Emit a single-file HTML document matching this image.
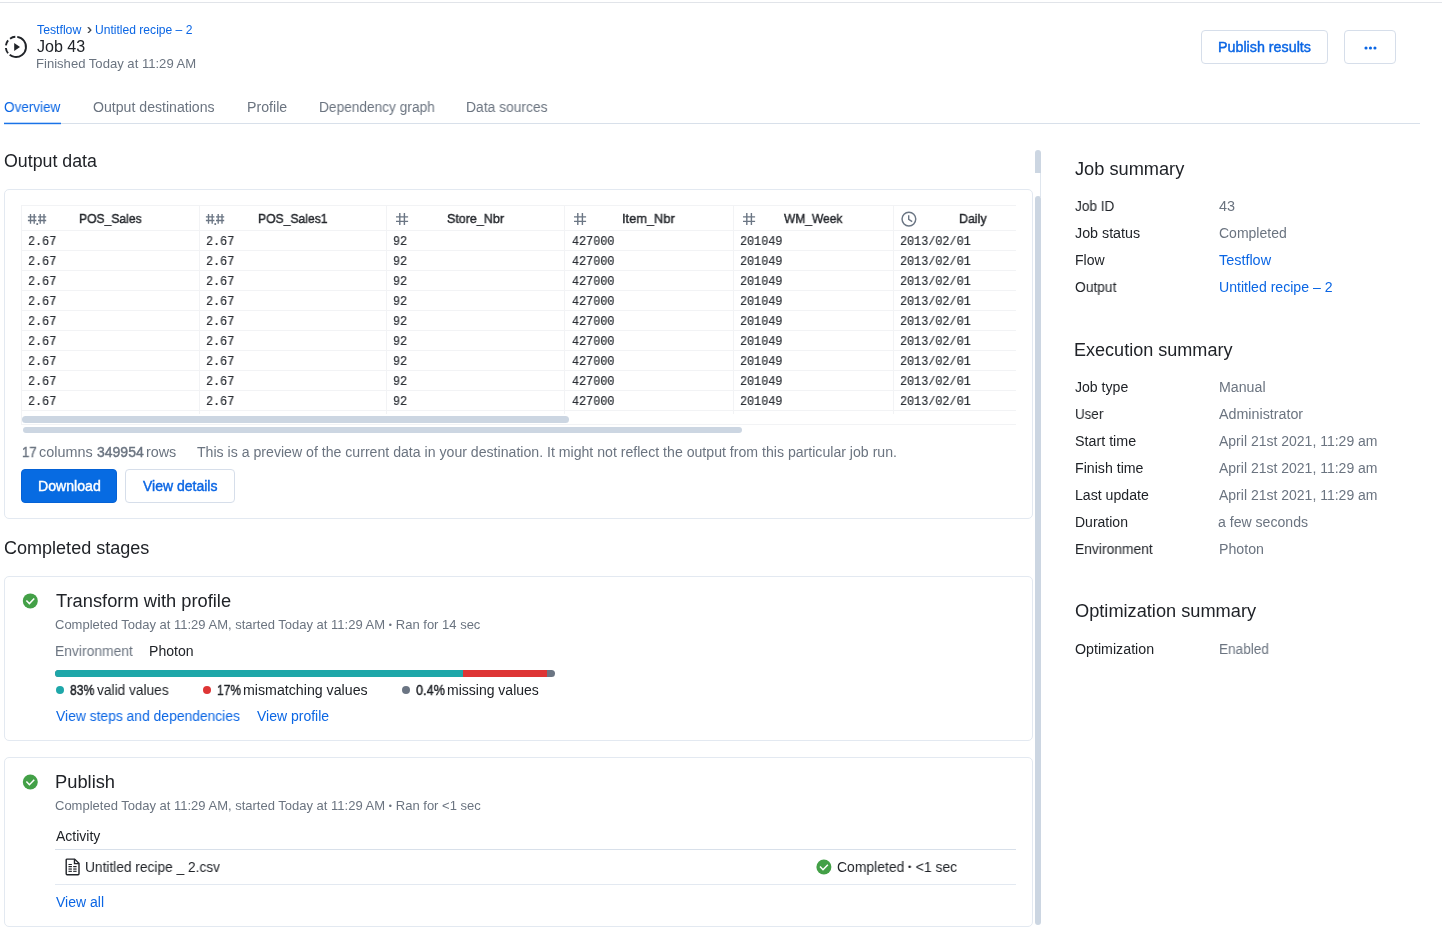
<!DOCTYPE html>
<html lang="en">
<head>
<meta charset="utf-8">
<title>Job 43</title>
<style>
html,body{margin:0;padding:0;background:#fff;}
body{width:1442px;height:944px;position:relative;overflow:hidden;font-family:"Liberation Sans",sans-serif;color:#202328;}
.a{position:absolute;white-space:nowrap;line-height:1;transform-origin:0 0;will-change:transform;}
.p{position:absolute;}
h1,h2,h3{margin:0;font-weight:normal;}
a{text-decoration:none;display:block;}
header,nav,main,section,aside{display:block;margin:0;padding:0;}
.card{position:absolute;border:1px solid #e3e9f1;border-radius:5px;box-sizing:border-box;background:#fff;}
.btn{position:absolute;box-sizing:border-box;border-radius:4px;}
.hl{position:absolute;height:1px;background:#f2f3f5;}
.vl{position:absolute;width:1px;background:#f2f3f5;}
.sb{position:absolute;background:#ccd6e2;}
</style>
</head>
<body>
<!-- top line -->
<div class="p" style="left:0;top:2px;width:1442px;height:1px;background:#e1e4e9;"></div>

<header>
<!-- header icon -->
<svg class="p" style="left:3px;top:34.3px;" width="26" height="26" viewBox="0 0 26 26">
  <circle cx="12.9" cy="12.9" r="10.1" fill="none" stroke="#202328" stroke-width="1.9" stroke-dasharray="36.85 2.29 5.64 2.64 5.46 2.64 5.55 2.39" transform="rotate(-82.3 12.9 12.9)"/>
  <path d="M11.2 9.1 L17 13 L11.2 16.9 Z" fill="#202328"/>
</svg>

<!-- header buttons -->
<div class="btn" style="left:1201px;top:30px;width:127px;height:34px;border:1px solid #d6deea;"></div>
<div class="btn" style="left:1344px;top:30px;width:52px;height:34px;border:1px solid #d6deea;">
  <svg width="16" height="6" viewBox="0 0 16 6" style="position:absolute;left:17.8px;top:13.6px;"><circle cx="3" cy="3" r="1.55" fill="#0b66e4"/><circle cx="7.45" cy="3" r="1.55" fill="#0b66e4"/><circle cx="11.95" cy="3" r="1.55" fill="#0b66e4"/></svg>
</div>

<a href="#" class="a" style="left:36.64px;top:23.80px;color:#0b66e4;font-family:'Liberation Sans',sans-serif;font-size:12px;transform:scaleX(1.0220);">Testflow</a>
<div class="a" style="left:86.90px;top:21.40px;color:#33373d;font-family:'Liberation Sans',sans-serif;font-size:15px;-webkit-text-stroke:0.2px #33373d;">›</div>
<a href="#" class="a" style="left:94.64px;top:23.80px;color:#0b66e4;font-family:'Liberation Sans',sans-serif;font-size:12px;transform:scaleX(1.0073);">Untitled recipe – 2</a>
<h1 class="a" style="left:36.65px;top:39.00px;color:#202328;font-family:'Liberation Sans',sans-serif;font-size:16px;transform:scaleX(1.0043);">Job 43</h1>
<div class="a" style="left:35.89px;top:56.60px;color:#6b7480;font-family:'Liberation Sans',sans-serif;font-size:13px;transform:scaleX(1.0060);">Finished Today at 11:29 AM</div>
<div class="a" style="left:1218.08px;top:39.80px;color:#0b66e4;font-family:'Liberation Sans',sans-serif;font-size:14px;-webkit-text-stroke:0.42px #0b66e4;transform:scaleX(1.0206);">Publish results</div>
</header>
<nav>
<!-- tabs underline -->
<div class="p" style="left:4px;top:123px;width:1416px;height:1px;background:#d8e0ea;"></div>
<div class="p" style="left:4px;top:122px;width:57px;height:1px;background:rgba(26,115,232,.3);"></div>
<div class="p" style="left:4px;top:123px;width:57px;height:1px;background:#1a73e8;"></div>
<div class="p" style="left:4px;top:124px;width:57px;height:1px;background:rgba(26,115,232,.2);"></div>

<a href="#" class="a" style="left:4.18px;top:100.10px;color:#0b66e4;font-family:'Liberation Sans',sans-serif;font-size:14px;transform:scaleX(0.9643);">Overview</a>
<div class="a" style="left:92.89px;top:100.10px;color:#6b7480;font-family:'Liberation Sans',sans-serif;font-size:14px;transform:scaleX(1.0079);">Output destinations</div>
<div class="a" style="left:246.89px;top:100.10px;color:#6b7480;font-family:'Liberation Sans',sans-serif;font-size:14px;transform:scaleX(1.0118);">Profile</div>
<div class="a" style="left:318.92px;top:100.10px;color:#6b7480;font-family:'Liberation Sans',sans-serif;font-size:14px;transform:scaleX(0.9785);">Dependency graph</div>
<div class="a" style="left:466.41px;top:100.10px;color:#6b7480;font-family:'Liberation Sans',sans-serif;font-size:14px;transform:scaleX(0.9889);">Data sources</div>
</nav>
<main>
<section>
<!-- card 1: output data -->
<div class="card" style="left:4px;top:189px;width:1029px;height:330px;"></div>
<div class="p" id="tbl" style="left:21px;top:205px;width:995px;height:220px;overflow:hidden;">
  <!-- outer borders -->
  <div class="hl" style="left:0;top:0;width:995px;"></div>
  <div class="vl" style="left:0;top:0;height:220px;"></div>
  <div class="hl" style="left:0;top:219px;width:995px;"></div>
  <!-- header bottom + row lines -->
  <div class="hl" style="left:0;top:25px;width:995px;"></div>
  <div class="hl" style="left:0;top:45px;width:995px;"></div>
  <div class="hl" style="left:0;top:65px;width:995px;"></div>
  <div class="hl" style="left:0;top:85px;width:995px;"></div>
  <div class="hl" style="left:0;top:105px;width:995px;"></div>
  <div class="hl" style="left:0;top:125px;width:995px;"></div>
  <div class="hl" style="left:0;top:145px;width:995px;"></div>
  <div class="hl" style="left:0;top:165px;width:995px;"></div>
  <div class="hl" style="left:0;top:185px;width:995px;"></div>
  <div class="hl" style="left:0;top:205px;width:995px;"></div>
  <!-- column lines -->
  <div class="vl" style="left:178px;top:0;height:209px;"></div>
  <div class="vl" style="left:365px;top:0;height:209px;"></div>
  <div class="vl" style="left:543px;top:0;height:209px;"></div>
  <div class="vl" style="left:712px;top:0;height:209px;"></div>
  <div class="vl" style="left:872px;top:0;height:209px;"></div>
</div>
<!-- header icons -->
<svg class="p" style="left:26px;top:212px;" width="22" height="14" viewBox="0 0 22 14">
  <g stroke="#6b7684" stroke-width="1.35" fill="none">
    <path d="M4.5 1.9v9.8M8.2 1.9v9.8M1.9 4.9h8.5M1.9 8.5h8.5"/>
    <path d="M14.2 1.9v9.8M18 1.9v9.8M12 4.9h8.2M12 8.5h8.2"/>
  </g>
  <rect x="10.4" y="11.2" width="1.7" height="1.7" fill="#5f6a78"/>
</svg>
<svg class="p" style="left:204px;top:212px;" width="22" height="14" viewBox="0 0 22 14">
  <g stroke="#6b7684" stroke-width="1.35" fill="none">
    <path d="M4.5 1.9v9.8M8.2 1.9v9.8M1.9 4.9h8.5M1.9 8.5h8.5"/>
    <path d="M14.2 1.9v9.8M18 1.9v9.8M12 4.9h8.2M12 8.5h8.2"/>
  </g>
  <rect x="10.4" y="11.2" width="1.7" height="1.7" fill="#5f6a78"/>
</svg>
<svg class="p" style="left:395px;top:212px;" width="14" height="14" viewBox="0 0 14 14"><path d="M4.8 1.1v11.9M9.4 1.1v11.9M1 4.9h12.1M1 9.4h12.1" stroke="#6b7684" stroke-width="1.4" fill="none"/></svg>
<svg class="p" style="left:573px;top:212px;" width="14" height="14" viewBox="0 0 14 14"><path d="M4.8 1.1v11.9M9.4 1.1v11.9M1 4.9h12.1M1 9.4h12.1" stroke="#6b7684" stroke-width="1.4" fill="none"/></svg>
<svg class="p" style="left:742px;top:212px;" width="14" height="14" viewBox="0 0 14 14"><path d="M4.8 1.1v11.9M9.4 1.1v11.9M1 4.9h12.1M1 9.4h12.1" stroke="#6b7684" stroke-width="1.4" fill="none"/></svg>
<svg class="p" style="left:900px;top:210px;" width="18" height="18" viewBox="0 0 18 18"><circle cx="8.9" cy="9.1" r="6.85" fill="none" stroke="#6b7684" stroke-width="1.45"/><path d="M8.7 5.3v4.1l3.5 2.2" fill="none" stroke="#6b7684" stroke-width="1.4"/></svg>

<!-- table scrollbars -->
<div class="sb" style="left:22px;top:416px;width:547px;height:7px;border-radius:3.5px;"></div>
<div class="sb" style="left:23px;top:427px;width:719px;height:6px;border-radius:3px;"></div>

<!-- buttons -->
<div class="btn" style="left:21px;top:469px;width:96px;height:34px;background:#076be2;border:1px solid #0562d6;"></div>
<div class="btn" style="left:125px;top:469px;width:110px;height:34px;border:1px solid #d6deea;"></div>

<h2 class="a" style="left:4.14px;top:152.60px;color:#202328;font-family:'Liberation Sans',sans-serif;font-size:17.5px;transform:scaleX(1.0160);">Output data</h2>
<div class="a" style="left:79.20px;top:211.90px;color:#24272c;font-family:'Liberation Sans',sans-serif;font-size:13px;-webkit-text-stroke:0.42px #24272c;transform:scaleX(0.9313);">POS_Sales</div>
<div class="a" style="left:257.50px;top:211.90px;color:#24272c;font-family:'Liberation Sans',sans-serif;font-size:13px;-webkit-text-stroke:0.42px #24272c;transform:scaleX(0.9338);">POS_Sales1</div>
<div class="a" style="left:447.16px;top:211.90px;color:#24272c;font-family:'Liberation Sans',sans-serif;font-size:13px;-webkit-text-stroke:0.42px #24272c;transform:scaleX(0.9610);">Store_Nbr</div>
<div class="a" style="left:622.42px;top:211.90px;color:#24272c;font-family:'Liberation Sans',sans-serif;font-size:13px;-webkit-text-stroke:0.42px #24272c;transform:scaleX(0.9848);">Item_Nbr</div>
<div class="a" style="left:783.93px;top:211.90px;color:#24272c;font-family:'Liberation Sans',sans-serif;font-size:13px;-webkit-text-stroke:0.42px #24272c;transform:scaleX(0.9234);">WM_Week</div>
<div class="a" style="left:958.99px;top:211.90px;color:#24272c;font-family:'Liberation Sans',sans-serif;font-size:13px;-webkit-text-stroke:0.42px #24272c;transform:scaleX(0.9522);">Daily</div>
<div class="a" style="left:27.72px;top:234.70px;color:#2b2f35;font-family:'Liberation Mono',monospace;font-size:13px;-webkit-text-stroke:0.2px #2b2f35;transform:scaleX(0.9060);">2.67</div>
<div class="a" style="left:205.72px;top:234.70px;color:#2b2f35;font-family:'Liberation Mono',monospace;font-size:13px;-webkit-text-stroke:0.2px #2b2f35;transform:scaleX(0.9060);">2.67</div>
<div class="a" style="left:393.47px;top:234.70px;color:#2b2f35;font-family:'Liberation Mono',monospace;font-size:13px;-webkit-text-stroke:0.2px #2b2f35;transform:scaleX(0.9060);">92</div>
<div class="a" style="left:571.95px;top:234.70px;color:#2b2f35;font-family:'Liberation Mono',monospace;font-size:13px;-webkit-text-stroke:0.2px #2b2f35;transform:scaleX(0.9060);">427000</div>
<div class="a" style="left:739.92px;top:234.70px;color:#2b2f35;font-family:'Liberation Mono',monospace;font-size:13px;-webkit-text-stroke:0.2px #2b2f35;transform:scaleX(0.9060);">201049</div>
<div class="a" style="left:899.72px;top:234.70px;color:#2b2f35;font-family:'Liberation Mono',monospace;font-size:13px;-webkit-text-stroke:0.2px #2b2f35;transform:scaleX(0.9060);">2013/02/01</div>
<div class="a" style="left:27.72px;top:254.70px;color:#2b2f35;font-family:'Liberation Mono',monospace;font-size:13px;-webkit-text-stroke:0.2px #2b2f35;transform:scaleX(0.9060);">2.67</div>
<div class="a" style="left:205.72px;top:254.70px;color:#2b2f35;font-family:'Liberation Mono',monospace;font-size:13px;-webkit-text-stroke:0.2px #2b2f35;transform:scaleX(0.9060);">2.67</div>
<div class="a" style="left:393.47px;top:254.70px;color:#2b2f35;font-family:'Liberation Mono',monospace;font-size:13px;-webkit-text-stroke:0.2px #2b2f35;transform:scaleX(0.9060);">92</div>
<div class="a" style="left:571.95px;top:254.70px;color:#2b2f35;font-family:'Liberation Mono',monospace;font-size:13px;-webkit-text-stroke:0.2px #2b2f35;transform:scaleX(0.9060);">427000</div>
<div class="a" style="left:739.92px;top:254.70px;color:#2b2f35;font-family:'Liberation Mono',monospace;font-size:13px;-webkit-text-stroke:0.2px #2b2f35;transform:scaleX(0.9060);">201049</div>
<div class="a" style="left:899.72px;top:254.70px;color:#2b2f35;font-family:'Liberation Mono',monospace;font-size:13px;-webkit-text-stroke:0.2px #2b2f35;transform:scaleX(0.9060);">2013/02/01</div>
<div class="a" style="left:27.72px;top:274.70px;color:#2b2f35;font-family:'Liberation Mono',monospace;font-size:13px;-webkit-text-stroke:0.2px #2b2f35;transform:scaleX(0.9060);">2.67</div>
<div class="a" style="left:205.72px;top:274.70px;color:#2b2f35;font-family:'Liberation Mono',monospace;font-size:13px;-webkit-text-stroke:0.2px #2b2f35;transform:scaleX(0.9060);">2.67</div>
<div class="a" style="left:393.47px;top:274.70px;color:#2b2f35;font-family:'Liberation Mono',monospace;font-size:13px;-webkit-text-stroke:0.2px #2b2f35;transform:scaleX(0.9060);">92</div>
<div class="a" style="left:571.95px;top:274.70px;color:#2b2f35;font-family:'Liberation Mono',monospace;font-size:13px;-webkit-text-stroke:0.2px #2b2f35;transform:scaleX(0.9060);">427000</div>
<div class="a" style="left:739.92px;top:274.70px;color:#2b2f35;font-family:'Liberation Mono',monospace;font-size:13px;-webkit-text-stroke:0.2px #2b2f35;transform:scaleX(0.9060);">201049</div>
<div class="a" style="left:899.72px;top:274.70px;color:#2b2f35;font-family:'Liberation Mono',monospace;font-size:13px;-webkit-text-stroke:0.2px #2b2f35;transform:scaleX(0.9060);">2013/02/01</div>
<div class="a" style="left:27.72px;top:294.70px;color:#2b2f35;font-family:'Liberation Mono',monospace;font-size:13px;-webkit-text-stroke:0.2px #2b2f35;transform:scaleX(0.9060);">2.67</div>
<div class="a" style="left:205.72px;top:294.70px;color:#2b2f35;font-family:'Liberation Mono',monospace;font-size:13px;-webkit-text-stroke:0.2px #2b2f35;transform:scaleX(0.9060);">2.67</div>
<div class="a" style="left:393.47px;top:294.70px;color:#2b2f35;font-family:'Liberation Mono',monospace;font-size:13px;-webkit-text-stroke:0.2px #2b2f35;transform:scaleX(0.9060);">92</div>
<div class="a" style="left:571.95px;top:294.70px;color:#2b2f35;font-family:'Liberation Mono',monospace;font-size:13px;-webkit-text-stroke:0.2px #2b2f35;transform:scaleX(0.9060);">427000</div>
<div class="a" style="left:739.92px;top:294.70px;color:#2b2f35;font-family:'Liberation Mono',monospace;font-size:13px;-webkit-text-stroke:0.2px #2b2f35;transform:scaleX(0.9060);">201049</div>
<div class="a" style="left:899.72px;top:294.70px;color:#2b2f35;font-family:'Liberation Mono',monospace;font-size:13px;-webkit-text-stroke:0.2px #2b2f35;transform:scaleX(0.9060);">2013/02/01</div>
<div class="a" style="left:27.72px;top:314.70px;color:#2b2f35;font-family:'Liberation Mono',monospace;font-size:13px;-webkit-text-stroke:0.2px #2b2f35;transform:scaleX(0.9060);">2.67</div>
<div class="a" style="left:205.72px;top:314.70px;color:#2b2f35;font-family:'Liberation Mono',monospace;font-size:13px;-webkit-text-stroke:0.2px #2b2f35;transform:scaleX(0.9060);">2.67</div>
<div class="a" style="left:393.47px;top:314.70px;color:#2b2f35;font-family:'Liberation Mono',monospace;font-size:13px;-webkit-text-stroke:0.2px #2b2f35;transform:scaleX(0.9060);">92</div>
<div class="a" style="left:571.95px;top:314.70px;color:#2b2f35;font-family:'Liberation Mono',monospace;font-size:13px;-webkit-text-stroke:0.2px #2b2f35;transform:scaleX(0.9060);">427000</div>
<div class="a" style="left:739.92px;top:314.70px;color:#2b2f35;font-family:'Liberation Mono',monospace;font-size:13px;-webkit-text-stroke:0.2px #2b2f35;transform:scaleX(0.9060);">201049</div>
<div class="a" style="left:899.72px;top:314.70px;color:#2b2f35;font-family:'Liberation Mono',monospace;font-size:13px;-webkit-text-stroke:0.2px #2b2f35;transform:scaleX(0.9060);">2013/02/01</div>
<div class="a" style="left:27.72px;top:334.70px;color:#2b2f35;font-family:'Liberation Mono',monospace;font-size:13px;-webkit-text-stroke:0.2px #2b2f35;transform:scaleX(0.9060);">2.67</div>
<div class="a" style="left:205.72px;top:334.70px;color:#2b2f35;font-family:'Liberation Mono',monospace;font-size:13px;-webkit-text-stroke:0.2px #2b2f35;transform:scaleX(0.9060);">2.67</div>
<div class="a" style="left:393.47px;top:334.70px;color:#2b2f35;font-family:'Liberation Mono',monospace;font-size:13px;-webkit-text-stroke:0.2px #2b2f35;transform:scaleX(0.9060);">92</div>
<div class="a" style="left:571.95px;top:334.70px;color:#2b2f35;font-family:'Liberation Mono',monospace;font-size:13px;-webkit-text-stroke:0.2px #2b2f35;transform:scaleX(0.9060);">427000</div>
<div class="a" style="left:739.92px;top:334.70px;color:#2b2f35;font-family:'Liberation Mono',monospace;font-size:13px;-webkit-text-stroke:0.2px #2b2f35;transform:scaleX(0.9060);">201049</div>
<div class="a" style="left:899.72px;top:334.70px;color:#2b2f35;font-family:'Liberation Mono',monospace;font-size:13px;-webkit-text-stroke:0.2px #2b2f35;transform:scaleX(0.9060);">2013/02/01</div>
<div class="a" style="left:27.72px;top:354.70px;color:#2b2f35;font-family:'Liberation Mono',monospace;font-size:13px;-webkit-text-stroke:0.2px #2b2f35;transform:scaleX(0.9060);">2.67</div>
<div class="a" style="left:205.72px;top:354.70px;color:#2b2f35;font-family:'Liberation Mono',monospace;font-size:13px;-webkit-text-stroke:0.2px #2b2f35;transform:scaleX(0.9060);">2.67</div>
<div class="a" style="left:393.47px;top:354.70px;color:#2b2f35;font-family:'Liberation Mono',monospace;font-size:13px;-webkit-text-stroke:0.2px #2b2f35;transform:scaleX(0.9060);">92</div>
<div class="a" style="left:571.95px;top:354.70px;color:#2b2f35;font-family:'Liberation Mono',monospace;font-size:13px;-webkit-text-stroke:0.2px #2b2f35;transform:scaleX(0.9060);">427000</div>
<div class="a" style="left:739.92px;top:354.70px;color:#2b2f35;font-family:'Liberation Mono',monospace;font-size:13px;-webkit-text-stroke:0.2px #2b2f35;transform:scaleX(0.9060);">201049</div>
<div class="a" style="left:899.72px;top:354.70px;color:#2b2f35;font-family:'Liberation Mono',monospace;font-size:13px;-webkit-text-stroke:0.2px #2b2f35;transform:scaleX(0.9060);">2013/02/01</div>
<div class="a" style="left:27.72px;top:374.70px;color:#2b2f35;font-family:'Liberation Mono',monospace;font-size:13px;-webkit-text-stroke:0.2px #2b2f35;transform:scaleX(0.9060);">2.67</div>
<div class="a" style="left:205.72px;top:374.70px;color:#2b2f35;font-family:'Liberation Mono',monospace;font-size:13px;-webkit-text-stroke:0.2px #2b2f35;transform:scaleX(0.9060);">2.67</div>
<div class="a" style="left:393.47px;top:374.70px;color:#2b2f35;font-family:'Liberation Mono',monospace;font-size:13px;-webkit-text-stroke:0.2px #2b2f35;transform:scaleX(0.9060);">92</div>
<div class="a" style="left:571.95px;top:374.70px;color:#2b2f35;font-family:'Liberation Mono',monospace;font-size:13px;-webkit-text-stroke:0.2px #2b2f35;transform:scaleX(0.9060);">427000</div>
<div class="a" style="left:739.92px;top:374.70px;color:#2b2f35;font-family:'Liberation Mono',monospace;font-size:13px;-webkit-text-stroke:0.2px #2b2f35;transform:scaleX(0.9060);">201049</div>
<div class="a" style="left:899.72px;top:374.70px;color:#2b2f35;font-family:'Liberation Mono',monospace;font-size:13px;-webkit-text-stroke:0.2px #2b2f35;transform:scaleX(0.9060);">2013/02/01</div>
<div class="a" style="left:27.72px;top:394.70px;color:#2b2f35;font-family:'Liberation Mono',monospace;font-size:13px;-webkit-text-stroke:0.2px #2b2f35;transform:scaleX(0.9060);">2.67</div>
<div class="a" style="left:205.72px;top:394.70px;color:#2b2f35;font-family:'Liberation Mono',monospace;font-size:13px;-webkit-text-stroke:0.2px #2b2f35;transform:scaleX(0.9060);">2.67</div>
<div class="a" style="left:393.47px;top:394.70px;color:#2b2f35;font-family:'Liberation Mono',monospace;font-size:13px;-webkit-text-stroke:0.2px #2b2f35;transform:scaleX(0.9060);">92</div>
<div class="a" style="left:571.95px;top:394.70px;color:#2b2f35;font-family:'Liberation Mono',monospace;font-size:13px;-webkit-text-stroke:0.2px #2b2f35;transform:scaleX(0.9060);">427000</div>
<div class="a" style="left:739.92px;top:394.70px;color:#2b2f35;font-family:'Liberation Mono',monospace;font-size:13px;-webkit-text-stroke:0.2px #2b2f35;transform:scaleX(0.9060);">201049</div>
<div class="a" style="left:899.72px;top:394.70px;color:#2b2f35;font-family:'Liberation Mono',monospace;font-size:13px;-webkit-text-stroke:0.2px #2b2f35;transform:scaleX(0.9060);">2013/02/01</div>
<div class="a" style="left:21.69px;top:444.60px;color:#6b7480;font-family:'Liberation Sans',sans-serif;font-size:14px;-webkit-text-stroke:0.42px #6b7480;transform:scaleX(0.9448);">17</div>
<div class="a" style="left:39.39px;top:444.60px;color:#6b7480;font-family:'Liberation Sans',sans-serif;font-size:14px;transform:scaleX(1.0283);">columns</div>
<div class="a" style="left:97.40px;top:444.60px;color:#6b7480;font-family:'Liberation Sans',sans-serif;font-size:14px;-webkit-text-stroke:0.42px #6b7480;">349954</div>
<div class="a" style="left:146.12px;top:444.60px;color:#6b7480;font-family:'Liberation Sans',sans-serif;font-size:14px;transform:scaleX(1.0250);">rows</div>
<div class="a" style="left:197.15px;top:444.60px;color:#6b7480;font-family:'Liberation Sans',sans-serif;font-size:14px;transform:scaleX(1.0084);">This is a preview of the current data in your destination. It might not reflect the output from this particular job run.</div>
<div class="a" style="left:37.64px;top:479.10px;color:#ffffff;font-family:'Liberation Sans',sans-serif;font-size:14px;-webkit-text-stroke:0.42px #ffffff;transform:scaleX(1.0074);">Download</div>
<div class="a" style="left:143.40px;top:479.10px;color:#0b66e4;font-family:'Liberation Sans',sans-serif;font-size:14px;-webkit-text-stroke:0.42px #0b66e4;">View details</div>
</section>
<section>
<h2 class="a" style="left:4.13px;top:540.00px;color:#202328;font-family:'Liberation Sans',sans-serif;font-size:17.5px;transform:scaleX(1.0301);">Completed stages</h2>
<section>
<!-- card 2 -->
<div class="card" style="left:4px;top:576px;width:1029px;height:165px;"></div>
<svg class="p" style="left:22px;top:593px;" width="16" height="16" viewBox="0 0 16 16"><circle cx="8.3" cy="7.9" r="7.5" fill="#43a047"/><path d="M4.4 7.5l3 3.1l4.85-5" fill="none" stroke="#fff" stroke-width="1.5"/></svg>
<div class="p" style="left:55px;top:670px;width:500px;height:7px;border-radius:3.5px;overflow:hidden;background:#6b7583;">
  <div class="p" style="left:0;top:0;width:408px;height:7px;background:#1ea7a9;"></div>
  <div class="p" style="left:408px;top:0;width:84px;height:7px;background:#de3535;"></div>
</div>
<div class="p" style="left:56px;top:685.7px;width:8px;height:8px;border-radius:4px;background:#1ea7a9;"></div>
<div class="p" style="left:203px;top:685.7px;width:8px;height:8px;border-radius:4px;background:#de3535;"></div>
<div class="p" style="left:402px;top:685.7px;width:8px;height:8px;border-radius:4px;background:#6b7583;"></div>

<h3 class="a" style="left:55.89px;top:591.60px;color:#202328;font-family:'Liberation Sans',sans-serif;font-size:18px;transform:scaleX(1.0158);">Transform with profile</h3>
<div class="a" style="left:55.15px;top:617.60px;color:#6b7480;font-family:'Liberation Sans',sans-serif;font-size:13px;">Completed Today at 11:29 AM, started Today at 11:29 AM <span style="font-size:9px;vertical-align:1.4px;letter-spacing:0.4px;">•</span> Ran for 14 sec</div>
<div class="a" style="left:54.91px;top:643.60px;color:#6b7480;font-family:'Liberation Sans',sans-serif;font-size:14px;transform:scaleX(0.9897);">Environment</div>
<div class="a" style="left:149.40px;top:643.60px;color:#202328;font-family:'Liberation Sans',sans-serif;font-size:14px;transform:scaleX(1.0047);">Photon</div>
<div class="a" style="left:69.97px;top:683.10px;color:#202328;font-family:'Liberation Sans',sans-serif;font-size:14px;-webkit-text-stroke:0.42px #202328;transform:scaleX(0.8697);">83%</div>
<div class="a" style="left:97.40px;top:683.10px;color:#202328;font-family:'Liberation Sans',sans-serif;font-size:14px;transform:scaleX(0.9787);">valid values</div>
<div class="a" style="left:216.76px;top:683.10px;color:#202328;font-family:'Liberation Sans',sans-serif;font-size:14px;-webkit-text-stroke:0.42px #202328;transform:scaleX(0.8593);">17%</div>
<div class="a" style="left:243.39px;top:683.10px;color:#202328;font-family:'Liberation Sans',sans-serif;font-size:14px;transform:scaleX(1.0140);">mismatching values</div>
<div class="a" style="left:415.57px;top:683.10px;color:#202328;font-family:'Liberation Sans',sans-serif;font-size:14px;-webkit-text-stroke:0.42px #202328;transform:scaleX(0.9056);">0.4%</div>
<div class="a" style="left:446.90px;top:683.10px;color:#202328;font-family:'Liberation Sans',sans-serif;font-size:14px;">missing values</div>
<a href="#" class="a" style="left:55.65px;top:708.60px;color:#0b66e4;font-family:'Liberation Sans',sans-serif;font-size:14px;transform:scaleX(0.9903);">View steps and dependencies</a>
<a href="#" class="a" style="left:257.15px;top:708.60px;color:#0b66e4;font-family:'Liberation Sans',sans-serif;font-size:14px;transform:scaleX(0.9958);">View profile</a>
</section>
<section>
<!-- card 3 -->
<div class="card" style="left:4px;top:757px;width:1029px;height:170px;"></div>
<svg class="p" style="left:22px;top:774px;" width="16" height="16" viewBox="0 0 16 16"><circle cx="8.3" cy="8" r="7.5" fill="#43a047"/><path d="M4.4 7.6l3 3.1l4.85-5" fill="none" stroke="#fff" stroke-width="1.5"/></svg>
<div class="p" style="left:55px;top:849px;width:961px;height:1px;background:#d8e0ea;"></div>
<div class="p" style="left:55px;top:884px;width:961px;height:1px;background:#e3e9f1;"></div>
<svg class="p" style="left:64px;top:857px;" width="18" height="20" viewBox="0 0 18 20">
  <path d="M3.1 2.1h7.5l4.4 4.2v10.5a.9.9 0 0 1-.9.9H3.1a.9.9 0 0 1-.9-.9V3a.9.9 0 0 1 .9-.9z" fill="none" stroke="#202328" stroke-width="1.4"/>
  <path d="M10.5 2.3v4.3h4.3" fill="none" stroke="#202328" stroke-width="1.4"/>
  <path d="M4.5 7.5h3.4M4.5 9.5h3.4M9.2 9.5h3.4M4.5 14.4h3.4M9.2 14.4h3.4" stroke="#202328" stroke-width="1" fill="none"/>
  <path d="M4.5 11.2h3.4M9.2 11.2h3.4M4.5 12.7h3.4M9.2 12.7h3.4" stroke="#202328" stroke-width="1" opacity=".8" fill="none"/>
</svg>
<svg class="p" style="left:816px;top:859px;" width="16" height="16" viewBox="0 0 16 16"><circle cx="7.9" cy="8" r="7.5" fill="#43a047"/><path d="M4 7.6l3 3.1l4.85-5" fill="none" stroke="#fff" stroke-width="1.5"/></svg>

<h3 class="a" style="left:54.87px;top:772.60px;color:#202328;font-family:'Liberation Sans',sans-serif;font-size:18px;transform:scaleX(1.0169);">Publish</h3>
<div class="a" style="left:55.15px;top:798.60px;color:#6b7480;font-family:'Liberation Sans',sans-serif;font-size:13px;">Completed Today at 11:29 AM, started Today at 11:29 AM <span style="font-size:9px;vertical-align:1.4px;letter-spacing:0.4px;">•</span> Ran for &lt;1 sec</div>
<div class="a" style="left:55.90px;top:828.60px;color:#202328;font-family:'Liberation Sans',sans-serif;font-size:14px;">Activity</div>
<div class="a" style="left:85.02px;top:859.85px;color:#202328;font-family:'Liberation Sans',sans-serif;font-size:14px;transform:scaleX(0.9799);">Untitled recipe _ 2.csv</div>
<div class="a" style="left:837.26px;top:859.85px;color:#202328;font-family:'Liberation Sans',sans-serif;font-size:14px;transform:scaleX(0.9929);">Completed <span style="font-size:9.5px;vertical-align:1.6px;letter-spacing:0.5px;">•</span> &lt;1 sec</div>
<a href="#" class="a" style="left:55.65px;top:894.60px;color:#0b66e4;font-family:'Liberation Sans',sans-serif;font-size:14px;transform:scaleX(0.9904);">View all</a>
</section>
</section>
<!-- main scrollbar -->
<div class="sb" style="left:1035px;top:150px;width:6px;height:23px;border-radius:3px 3px 0 0;"></div>
<div class="p" style="left:1040px;top:173px;width:1px;height:24px;background:#dfe6ee;"></div>
<div class="sb" style="left:1035px;top:196px;width:6px;height:729px;border-radius:3px;"></div>

</main>
<aside>
<h3 class="a" style="left:1075.14px;top:161.00px;color:#202328;font-family:'Liberation Sans',sans-serif;font-size:17.5px;transform:scaleX(1.0406);">Job summary</h3>
<h3 class="a" style="left:1073.85px;top:342.00px;color:#202328;font-family:'Liberation Sans',sans-serif;font-size:17.5px;transform:scaleX(1.0312);">Execution summary</h3>
<h3 class="a" style="left:1074.62px;top:603.00px;color:#202328;font-family:'Liberation Sans',sans-serif;font-size:17.5px;transform:scaleX(1.0401);">Optimization summary</h3>
<div class="a" style="left:1075.36px;top:199.00px;color:#202328;font-family:'Liberation Sans',sans-serif;font-size:14px;transform:scaleX(0.9747);">Job ID</div>
<div class="a" style="left:1218.64px;top:199.00px;color:#6b7480;font-family:'Liberation Sans',sans-serif;font-size:14px;transform:scaleX(1.0305);">43</div>
<div class="a" style="left:1075.34px;top:226.00px;color:#202328;font-family:'Liberation Sans',sans-serif;font-size:14px;transform:scaleX(1.0206);">Job status</div>
<div class="a" style="left:1218.95px;top:226.00px;color:#6b7480;font-family:'Liberation Sans',sans-serif;font-size:14px;">Completed</div>
<div class="a" style="left:1074.61px;top:253.00px;color:#202328;font-family:'Liberation Sans',sans-serif;font-size:14px;transform:scaleX(0.9930);">Flow</div>
<a href="#" class="a" style="left:1219.44px;top:253.00px;color:#0b66e4;font-family:'Liberation Sans',sans-serif;font-size:14px;transform:scaleX(1.0289);">Testflow</a>
<div class="a" style="left:1074.86px;top:280.00px;color:#202328;font-family:'Liberation Sans',sans-serif;font-size:14px;transform:scaleX(0.9842);">Output</div>
<a href="#" class="a" style="left:1218.69px;top:280.00px;color:#0b66e4;font-family:'Liberation Sans',sans-serif;font-size:14px;transform:scaleX(1.0058);">Untitled recipe – 2</a>
<div class="a" style="left:1075.35px;top:380.00px;color:#202328;font-family:'Liberation Sans',sans-serif;font-size:14px;transform:scaleX(1.0058);">Job type</div>
<div class="a" style="left:1218.69px;top:380.00px;color:#6b7480;font-family:'Liberation Sans',sans-serif;font-size:14px;transform:scaleX(1.0136);">Manual</div>
<div class="a" style="left:1074.64px;top:407.00px;color:#202328;font-family:'Liberation Sans',sans-serif;font-size:14px;transform:scaleX(0.9558);">User</div>
<div class="a" style="left:1218.90px;top:407.00px;color:#6b7480;font-family:'Liberation Sans',sans-serif;font-size:14px;transform:scaleX(1.0201);">Administrator</div>
<div class="a" style="left:1074.83px;top:434.00px;color:#202328;font-family:'Liberation Sans',sans-serif;font-size:14px;transform:scaleX(1.0205);">Start time</div>
<div class="a" style="left:1218.90px;top:434.00px;color:#6b7480;font-family:'Liberation Sans',sans-serif;font-size:14px;">April 21st 2021, 11:29 am</div>
<div class="a" style="left:1074.59px;top:461.00px;color:#202328;font-family:'Liberation Sans',sans-serif;font-size:14px;transform:scaleX(1.0121);">Finish time</div>
<div class="a" style="left:1218.90px;top:461.00px;color:#6b7480;font-family:'Liberation Sans',sans-serif;font-size:14px;">April 21st 2021, 11:29 am</div>
<div class="a" style="left:1074.59px;top:488.00px;color:#202328;font-family:'Liberation Sans',sans-serif;font-size:14px;transform:scaleX(1.0084);">Last update</div>
<div class="a" style="left:1218.90px;top:488.00px;color:#6b7480;font-family:'Liberation Sans',sans-serif;font-size:14px;">April 21st 2021, 11:29 am</div>
<div class="a" style="left:1074.60px;top:515.00px;color:#202328;font-family:'Liberation Sans',sans-serif;font-size:14px;">Duration</div>
<div class="a" style="left:1218.40px;top:515.00px;color:#6b7480;font-family:'Liberation Sans',sans-serif;font-size:14px;transform:scaleX(1.0056);">a few seconds</div>
<div class="a" style="left:1074.61px;top:542.00px;color:#202328;font-family:'Liberation Sans',sans-serif;font-size:14px;transform:scaleX(0.9884);">Environment</div>
<div class="a" style="left:1218.69px;top:542.00px;color:#6b7480;font-family:'Liberation Sans',sans-serif;font-size:14px;transform:scaleX(1.0141);">Photon</div>
<div class="a" style="left:1074.84px;top:642.00px;color:#202328;font-family:'Liberation Sans',sans-serif;font-size:14px;transform:scaleX(1.0164);">Optimization</div>
<div class="a" style="left:1218.73px;top:642.00px;color:#6b7480;font-family:'Liberation Sans',sans-serif;font-size:14px;transform:scaleX(0.9717);">Enabled</div>
</aside>
</body>
</html>
